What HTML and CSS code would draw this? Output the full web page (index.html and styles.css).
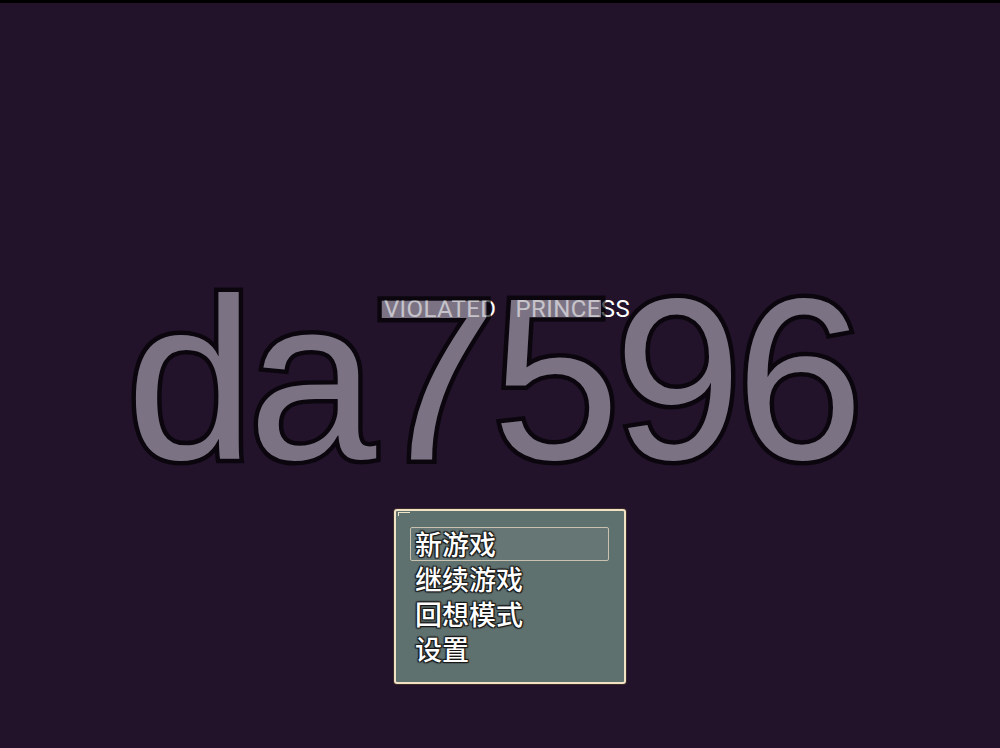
FILE: index.html
```html
<!DOCTYPE html>
<html lang="zh-CN">
<head>
    <meta charset="UTF-8">
    <meta name="viewport" content="width=device-width, initial-scale=1.0">
    <title>VIOLATED PRINCESS</title>
    <link rel="stylesheet" href="styles.css">
</head>
<body>
    <div class="screen">
        <div class="game-title">VIOLATED&nbsp;&nbsp; PRINCESS</div>

        <div class="command-window">
            <div class="window-corner"></div>
            <ul class="command-list">
                <li class="command selected">新游戏</li>
                <li class="command">继续游戏</li>
                <li class="command">回想模式</li>
                <li class="command">设置</li>
            </ul>
        </div>

        <div class="watermark">da7596</div>
    </div>
</body>
</html>
```

FILE: styles.css
```css
body {
    margin: 0;
    padding: 0;
    background-color: #22132b;
    overflow: hidden;
}

.screen {
    position: relative;
    width: 1000px;
    height: 748px;
    box-sizing: border-box;
    border-top: 3px solid #000;
    display: flex;
    flex-direction: column;
    align-items: center;
    padding-top: 292px;
}

.game-title {
    font-family: Roboto, "Liberation Sans", sans-serif;
    font-size: 24px;
    line-height: 28px;
    color: #fff;
    letter-spacing: 0.4px;
    margin-left: 14px;
}

/* the RPG-style command window */
.command-window {
    position: relative;
    margin-top: 186px;
    margin-left: 20px;
    width: 232px;
    height: 175px;
    box-sizing: border-box;
    background: #5f716f;
    border: 2px solid #f1e2c4;
    border-radius: 3px;
    box-shadow: 0 0 0 1px #3a2a2a;
    padding: 16px 15px 0 14px;
}

.window-corner {
    position: absolute;
    top: 1px;
    left: 2px;
    width: 11px;
    height: 3px;
    border-top: 1px solid #efe3c8;
    border-left: 1px solid #efe3c8;
}

.command-list {
    list-style: none;
    margin: 0;
    padding: 0;
}

.command {
    height: 35px;
    box-sizing: border-box;
    padding-left: 5px;
    font-family: "Noto Sans CJK SC", sans-serif;
    font-size: 27px;
    font-weight: 500;
    line-height: 34px;
    color: #fff;
    text-shadow: 0 0 2px #111, 1px 1px 1px #1a1a1a, -1px -1px 1px #1a1a1a, 1px -1px 1px #1a1a1a, -1px 1px 1px #1a1a1a;
}

.command.selected {
    height: 34px;
    margin-bottom: 1px;
    border: 1px solid #c9c2b0;
    border-radius: 2px;
    line-height: 32px;
    padding-left: 4px;
    background: rgba(255, 255, 255, 0.04);
}

.watermark {
    position: absolute;
    top: 262px;
    left: 0;
    right: 0;
    text-align: center;
    font-family: "Liberation Sans", Arial, sans-serif;
    font-size: 230px;
    line-height: 1;
    letter-spacing: -6px;
    text-indent: -16px;
    color: #a9a5b1;
    -webkit-text-stroke: 9px #000;
    paint-order: stroke fill;
    opacity: 0.66;
    pointer-events: none;
}
```
